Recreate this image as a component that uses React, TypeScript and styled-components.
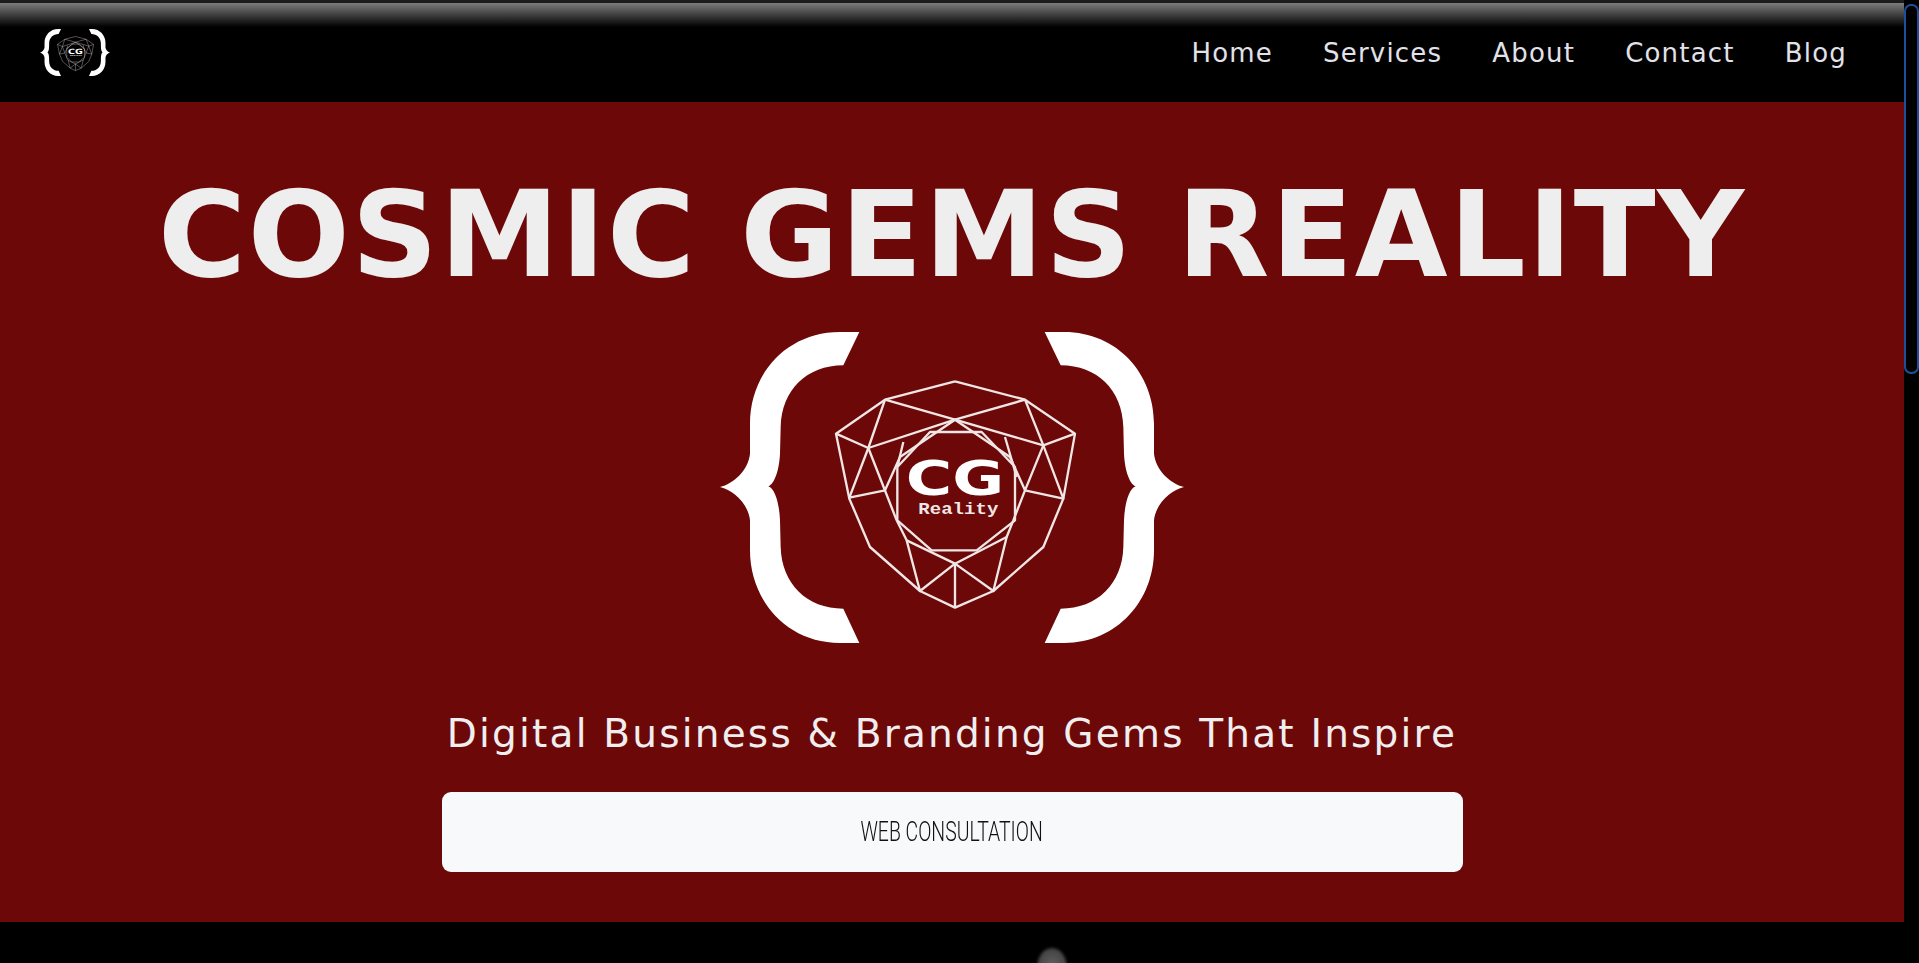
import React from 'react';
import styled, { createGlobalStyle } from 'styled-components';

const GlobalStyle = createGlobalStyle`
  html, body {
    margin: 0;
    height: 100%;
    background: #000;
    overflow: hidden;
  }
`;

const Shell = styled.div`
  display: flex;
  height: 963px;
  overflow: hidden;
  background: #000;
`;

const Page = styled.div`
  flex: 1;
  min-width: 0;
  display: flex;
  flex-direction: column;
`;

const Rail = styled.div`
  width: 15px;
  padding-top: 4px;
  box-sizing: border-box;
`;

const Thumb = styled.div`
  height: 370px;
  box-sizing: border-box;
  border: 2px solid #1c4f9c;
  border-radius: 7px;
`;

const Nav = styled.nav`
  height: 102px;
  flex: none;
  display: flex;
  align-items: center;
  justify-content: space-between;
  padding: 0 57px 0 40px;
  box-sizing: border-box;
  background: linear-gradient(#1c1c1c 0 3px, #7c7c7c 3px, #000 27px);
`;

const NavLinks = styled.div`
  display: flex;
  gap: 50px;
  margin-top: 3px;
`;

const NavLink = styled.a`
  font: 400 26px "DejaVu Sans", sans-serif;
  letter-spacing: 1.2px;
  color: #e2e2ea;
  text-decoration: none;
`;

const Hero = styled.section`
  height: 820px;
  flex: none;
  display: flex;
  flex-direction: column;
  align-items: center;
  background: #6c0808;
`;

const Title = styled.h1`
  margin: 61px 0 0;
  font: 700 120px/1.2 "DejaVu Sans", sans-serif;
  letter-spacing: 1.7px;
  color: #eeeeee;
  white-space: nowrap;
`;

const HeroLogo = styled.svg`
  width: 464px;
  height: 311px;
  margin-top: 25px;
`;

const SmallLogo = styled.svg`
  width: 70px;
  height: 49px;
  margin-top: 2px;
`;

const Tagline = styled.h2`
  margin: 68px 0 0;
  font: 400 39px/1.2 "DejaVu Sans", sans-serif;
  letter-spacing: 2.2px;
  color: #f0eeee;
  white-space: nowrap;
`;

const CtaButton = styled.button`
  width: 1021px;
  height: 80px;
  margin-top: 34px;
  border: 0;
  border-radius: 9px;
  background: #f8f9fa;
  color: #111;
  font: 300 27px "Roboto", sans-serif;
  cursor: pointer;
`;

const CtaLabel = styled.span`
  display: inline-block;
  transform: scaleX(0.72);
`;

const Lower = styled.section`
  flex: 1;
  display: flex;
  justify-content: center;
  padding-top: 26px;
  background: #000;
`;

const Orb = styled.div`
  width: 30px;
  height: 40px;
  flex: none;
  border-radius: 50%;
  background: radial-gradient(circle at 50% 40%, #5e5e5e, #3a3a3a 70%, #111);
  filter: blur(1.5px);
  margin-left: 200px;
`;

const BRACE =
  'M478 35 L430 135 C320 135 245 210 242 320 L240 400 C238 445 225 490 205 498 C225 505 238 550 240 600 L242 680 C245 790 320 865 430 865 L478 968 L420 968 C260 968 150 840 150 690 L150 600 C145 550 100 510 60 500 C100 490 145 450 150 400 L150 310 C150 160 260 35 420 35 Z';

const GEM_LINES = [
  '765,183 975,238 1125,340 1090,535 1030,680 880,812 765,862 660,812 510,680 448,535 408,340 555,238 765,183',
  '555,238 765,298 1030,375',
  '975,238 765,298 505,383',
  '408,340 505,383 448,532 555,510',
  '1125,340 1030,375 1090,535 975,510',
  '555,238 505,383 590,600',
  '975,238 1030,375 975,510 940,600',
  '555,510 600,410 765,298 930,410 975,510',
  '610,365 592,440 592,600 695,690 830,690 945,600 945,440 845,335 690,335 592,440',
  '915,350 950,470',
  '590,600 620,660 765,730 920,650 940,600',
  '620,660 660,812 765,730 880,812 920,650',
  '765,730 765,862',
];

function Logo() {
  return (
    <>
      <path d={BRACE} fill="#fff" />
      <path d={BRACE} fill="#fff" transform="translate(1512 0) scale(-1 1)" />
      {GEM_LINES.map((points) => (
        <polyline key={points} points={points} fill="none" stroke="#f0e6e6" strokeWidth="7" strokeLinejoin="round" />
      ))}
      <text x="765" y="525" textAnchor="middle" fontFamily="'DejaVu Sans', sans-serif" fontWeight="700" fontSize="144" fill="#fff" textLength="295" lengthAdjust="spacingAndGlyphs">CG</text>
      <text x="775" y="580" textAnchor="middle" fontFamily="'Liberation Mono', monospace" fontWeight="700" fontSize="48" fill="#f0e6e6" textLength="240" lengthAdjust="spacingAndGlyphs">Reality</text>
    </>
  );
}

const LINKS = ['Home', 'Services', 'About', 'Contact', 'Blog'];

export default function App() {
  return (
    <Shell>
      <GlobalStyle />
      <Page>
        <Nav>
          <SmallLogo viewBox="60 35 1392 933"><Logo /></SmallLogo>
          <NavLinks>
            {LINKS.map((link) => <NavLink key={link} href="#">{link}</NavLink>)}
          </NavLinks>
        </Nav>
        <Hero>
          <Title>COSMIC GEMS REALITY</Title>
          <HeroLogo viewBox="60 35 1392 933"><Logo /></HeroLogo>
          <Tagline>Digital Business &amp; Branding Gems That Inspire</Tagline>
          <CtaButton><CtaLabel>WEB CONSULTATION</CtaLabel></CtaButton>
        </Hero>
        <Lower><Orb /></Lower>
      </Page>
      <Rail><Thumb /></Rail>
    </Shell>
  );
}
